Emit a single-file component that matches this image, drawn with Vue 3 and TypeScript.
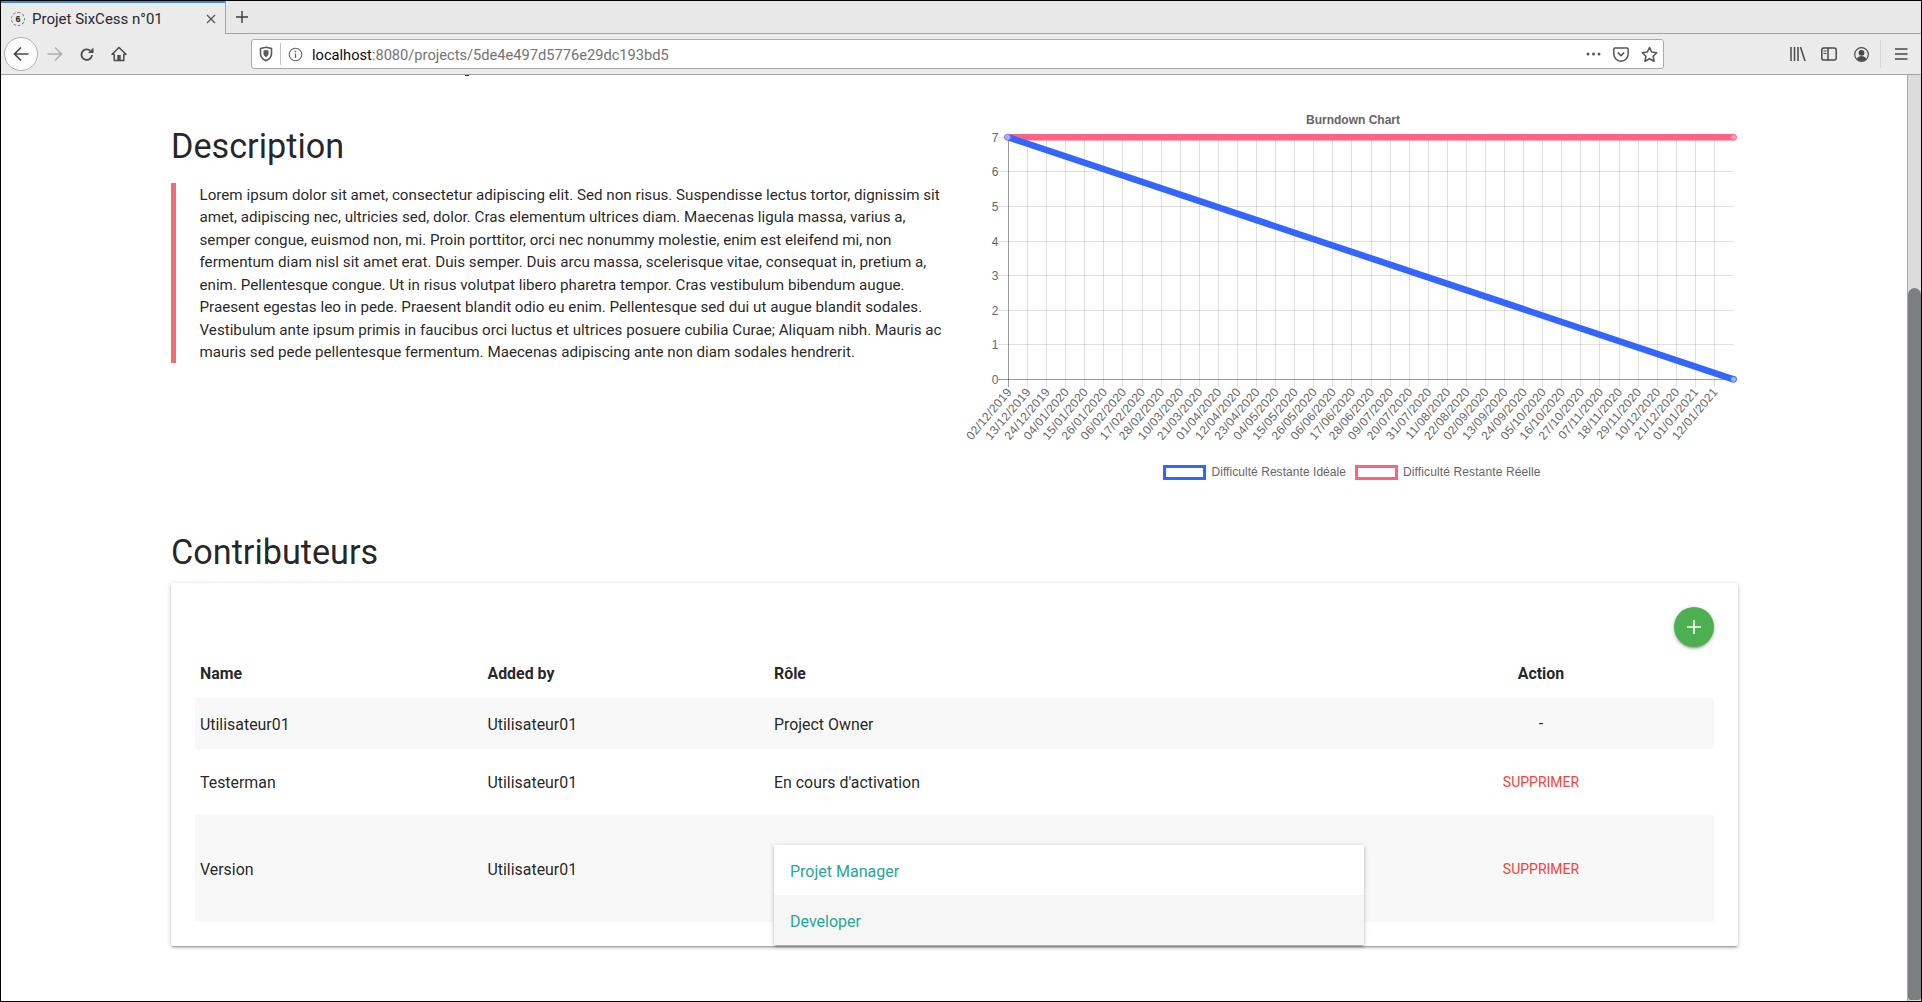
<script setup lang="ts">
const dates: string[] = [
  '02/12/2019','13/12/2019','24/12/2019','04/01/2020','15/01/2020','26/01/2020','06/02/2020','17/02/2020',
  '28/02/2020','10/03/2020','21/03/2020','01/04/2020','12/04/2020','23/04/2020','04/05/2020','15/05/2020',
  '26/05/2020','06/06/2020','17/06/2020','28/06/2020','09/07/2020','20/07/2020','31/07/2020','11/08/2020',
  '22/08/2020','02/09/2020','13/09/2020','24/09/2020','05/10/2020','16/10/2020','27/10/2020','07/11/2020',
  '18/11/2020','29/11/2020','10/12/2020','21/12/2020','01/01/2021','12/01/2021'
]
const x0 = 1008.5
const step = 19.08
const yTop = 137.3
const yBottom = 379.3
const xEnd = x0 + step * 38
const px = (v: number) => Math.round(v - 0.5) + 0.5
const xTicks = dates.map((label, i) => ({ label, x: px(x0 + step * i), lx: x0 + step * i + 4 }))
const yTicks = [7, 6, 5, 4, 3, 2, 1, 0].map((v) => ({ v, y: px(yBottom - (v * (yBottom - yTop)) / 7) }))
</script>

<template>
  <div class="frame">
    <header class="browser">
      <div class="tabbar">
        <div class="tab">
          <span class="favicon">6</span>
          <span class="tab-title">Projet SixCess n°01</span>
          <svg class="tab-close" width="12" height="12" viewBox="0 0 12 12"><path d="M2 2l8 8M10 2l-8 8" stroke="#555" stroke-width="1.3" fill="none" /></svg>
        </div>
        <svg class="new-tab" width="16" height="16" viewBox="0 0 16 16"><path d="M8 2v12M2 8h12" stroke="#3c3c3c" stroke-width="1.4" fill="none" /></svg>
      </div>
      <div class="toolbar">
        <button class="back">
          <svg width="18" height="18" viewBox="0 0 18 18"><path d="M16.5 9H2.5M9 2.5 2.5 9 9 15.500" stroke="#4a4a4a" stroke-width="1.7" fill="none" /></svg>
        </button>
        <svg class="t-forward" width="18" height="18" viewBox="0 0 18 18"><path d="M1.500 9h14M9 2.500 15.500 9 9 15.500" stroke="#b0b0b0" stroke-width="1.7" fill="none" /></svg>
        <svg class="t-reload" width="16" height="16" viewBox="0 0 16 16"><path d="M13 9a5.300 5.300 0 1 1-1.700-4.300" stroke="#4a4a4a" stroke-width="1.800" fill="none" /><path d="M14.500 1.500v5.500H9z" fill="#4a4a4a" /></svg>
        <svg class="t-home" width="16" height="16" viewBox="0 0 16 16"><path d="M8 1.500 1 8.200h2.200V14.500h9.600V8.200H15z" stroke="#4a4a4a" stroke-width="1.500" fill="none" stroke-linejoin="round" /><rect x="6.300" y="9" width="3.400" height="5.500" fill="#4a4a4a" /></svg>
        <div class="urlbar">
          <svg class="u-shield" width="14" height="16" viewBox="0 0 14 16"><path d="M1.500 2.500 7 1.200l5.500 1.300v5.200c0 3.200-2.400 5.500-5.500 7-3.100-1.500-5.500-3.800-5.500-7z" stroke="#5b5b5b" stroke-width="1.600" fill="none" /><path d="M4.500 4.500 7 4l2.500.5v3c0 1.800-1.200 3-2.500 3.800-1.300-.8-2.500-2-2.500-3.800z" fill="#5b5b5b" /></svg>
          <span class="u-sep"></span>
          <svg class="u-info" width="15" height="15" viewBox="0 0 15 15"><circle cx="7.500" cy="7.500" r="6.300" stroke="#666" stroke-width="1.100" fill="none" /><path d="M7.500 6.500v4.500" stroke="#666" stroke-width="1.300" /><circle cx="7.500" cy="4.400" r=".9" fill="#666" /></svg>
          <span class="u-text"><b>localhost</b>:8080/projects/5de4e497d5776e29dc193bd5</span>
          <svg class="u-dots" width="15" height="4" viewBox="0 0 15 4"><circle cx="2" cy="2" r="1.500" fill="#555" /><circle cx="7.500" cy="2" r="1.500" fill="#555" /><circle cx="13" cy="2" r="1.500" fill="#555" /></svg>
          <svg class="u-pocket" width="16" height="15" viewBox="0 0 16 15"><path d="M2 1h12a1.200 1.200 0 0 1 1.200 1.200V7a7.200 7.200 0 0 1-14.400 0V2.200A1.200 1.200 0 0 1 2 1z" stroke="#555" stroke-width="1.500" fill="none" /><path d="M4.800 5.500 8 8.500l3.200-3" stroke="#555" stroke-width="1.700" fill="none" /></svg>
          <svg class="u-star" width="17" height="16" viewBox="0 0 17 16"><path d="M8.500 1.500l2.200 4.500 5 .7-3.600 3.500.9 5-4.500-2.400L4 15.200l.9-5L1.300 6.700l5-.7z" stroke="#555" stroke-width="1.600" fill="none" stroke-linejoin="round" /></svg>
        </div>
        <svg class="r-lib" width="16" height="14" viewBox="0 0 16 14"><path d="M1 0v14M4.500 0v14M8 0v14M10.500 0l4.500 14" stroke="#4a4a4a" stroke-width="1.500" fill="none" /></svg>
        <svg class="r-side" width="16" height="14" viewBox="0 0 16 14"><rect x=".8" y="1" width="14.400" height="12" rx="2" stroke="#4a4a4a" stroke-width="1.500" fill="none" /><path d="M7 1v12" stroke="#4a4a4a" stroke-width="1.500" /><path d="M2.500 4h3M2.500 6.500h3" stroke="#4a4a4a" stroke-width="1.100" /></svg>
        <svg class="r-acc" width="15" height="15" viewBox="0 0 15 15"><circle cx="7.500" cy="7.500" r="6.800" stroke="#4a4a4a" stroke-width="1.200" fill="none" /><circle cx="7.500" cy="5.800" r="2.900" fill="#4a4a4a" /><path d="M2.800 12c1-2 2.700-2.900 4.700-2.900s3.700.9 4.700 2.900c-1.200 1.300-2.800 2-4.700 2s-3.500-.7-4.700-2z" fill="#4a4a4a" /></svg>
        <span class="r-sep"></span>
        <svg class="r-menu" width="13" height="12" viewBox="0 0 13 12"><path d="M0 1h12.500M0 6h12.500M0 11h12.500" stroke="#4a4a4a" stroke-width="1.500" /></svg>
      </div>
    </header>

    <div class="viewport">
      <main class="page">
        <span class="clipped-glyph"></span>
        <section class="top">
          <div class="desc">
            <h4>Description</h4>
            <blockquote>
              Lorem ipsum dolor sit amet, consectetur adipiscing elit. Sed non risus. Suspendisse lectus tortor, dignissim sit amet, adipiscing nec, ultricies sed, dolor. Cras elementum ultrices diam. Maecenas ligula massa, varius a, semper congue, euismod non, mi. Proin porttitor, orci nec nonummy molestie, enim est eleifend mi, non fermentum diam nisl sit amet erat. Duis semper. Duis arcu massa, scelerisque vitae, consequat in, pretium a, enim. Pellentesque congue. Ut in risus volutpat libero pharetra tempor. Cras vestibulum bibendum augue. Praesent egestas leo in pede. Praesent blandit odio eu enim. Pellentesque sed dui ut augue blandit sodales. Vestibulum ante ipsum primis in faucibus orci luctus et ultrices posuere cubilia Curae; Aliquam nibh. Mauris ac mauris sed pede pellentesque fermentum. Maecenas adipiscing ante non diam sodales hendrerit.
            </blockquote>
          </div>
          <svg class="chart" width="780" height="400" viewBox="960 100 780 400">
            <text x="1353" y="124" text-anchor="middle" class="c-title">Burndown Chart</text>
            <line v-for="t in xTicks" :key="t.label" :x1="t.x" :x2="t.x" :y1="137" y2="387" class="grid" />
            <line v-for="t in yTicks" :key="t.v" x1="998" :x2="xEnd" :y1="t.y" :y2="t.y" class="grid" />
            <line :x1="px(x0)" :x2="px(x0)" y1="137" y2="387" class="axis" />
            <line x1="998" :x2="xEnd" :y1="px(yBottom)" :y2="px(yBottom)" class="axis" />
            <text v-for="t in yTicks" :key="'y' + t.v" x="998.500" :y="t.y + 4" text-anchor="end" class="c-tick">{{ t.v }}</text>
            <text v-for="t in xTicks" :key="'l' + t.label" text-anchor="end" class="c-tick c-xlabel" :transform="`translate(${t.lx} 392) rotate(-50)`">{{ t.label }}</text>
            <line :x1="x0" :y1="yTop" :x2="xEnd" :y2="yTop" stroke="#ff6384" stroke-width="6.500" />
            <line :x1="x0" :y1="yTop" :x2="xEnd" :y2="yBottom" stroke="#3366ff" stroke-width="6.500" />
            <circle :cx="x0 - 1" :cy="yTop" r="3" fill="#b9a7e8" stroke="#6a7df0" />
            <circle :cx="xEnd" :cy="yTop" r="3" fill="#ff9fb3" stroke="#ff6384" />
            <circle :cx="xEnd" :cy="yBottom" r="3" fill="#9db6ff" stroke="#3366ff" />
            <rect x="1164.500" y="466.500" width="40" height="12" class="lg-blue" />
            <text x="1211.500" y="476" class="c-legend lg-a">Difficulté Restante Idéale</text>
            <rect x="1356.500" y="466.500" width="40" height="12" class="lg-pink" />
            <text x="1403" y="476" class="c-legend lg-b">Difficulté Restante Réelle</text>
          </svg>
        </section>

        <h4 class="contrib">Contributeurs</h4>
        <div class="card">
          <div class="card-actions">
            <button class="fab">
              <svg width="16" height="16" viewBox="0 0 16 16"><path d="M8 1v14M1 8h14" stroke="#fff" stroke-width="1.600" fill="none" /></svg>
            </button>
          </div>
          <table>
            <colgroup>
              <col class="c1" /><col class="c2" /><col class="c3" /><col class="c4" />
            </colgroup>
            <thead>
              <tr><th>Name</th><th>Added by</th><th>Rôle</th><th class="center">Action</th></tr>
            </thead>
            <tbody>
              <tr class="r1 striped"><td>Utilisateur01</td><td>Utilisateur01</td><td>Project Owner</td><td class="center">-</td></tr>
              <tr class="r2"><td>Testerman</td><td>Utilisateur01</td><td>En cours d'activation</td><td class="center"><a class="del">SUPPRIMER</a></td></tr>
              <tr class="r3 striped">
                <td>Version</td><td>Utilisateur01</td>
                <td class="select-cell">
                  <ul class="dropdown">
                    <li>Projet Manager</li>
                    <li class="active">Developer</li>
                  </ul>
                </td>
                <td class="center"><a class="del">SUPPRIMER</a></td>
              </tr>
            </tbody>
          </table>
        </div>
      </main>
      <div class="scrollbar"><div class="thumb"></div></div>
    </div>
  </div>
</template>

<style>
html, body { margin: 0; padding: 0; background: #fff; overflow: hidden; }
</style>

<style scoped>
.frame {
  box-sizing: border-box;
  width: 1922px;
  height: 1002px;
  border: 1px solid #000;
  display: flex;
  flex-direction: column;
  font-family: Roboto, "Liberation Sans", sans-serif;
  overflow: hidden;
}
.browser { flex: none; height: 73px; background: #ebebeb; border-bottom: 1px solid #a3a3a3; box-sizing: content-box; }
.tabbar { height: 32px; display: flex; align-items: center; background: #e8e8e8; border-bottom: 1px solid #a3a3a3; }
.tab {
  box-sizing: border-box;
  width: 225px;
  height: 33px;
  margin-bottom: -1px;
  background: #ebebeb;
  border-top: 2px solid #3d8ad6;
  border-right: 1px solid #a3a3a3;
  display: flex;
  align-items: center;
  padding-left: 10px;
}
.favicon {
  box-sizing: border-box;
  width: 14px;
  height: 14px;
  border: 1px dashed #777;
  border-radius: 50%;
  font: bold 9px/12px "Liberation Sans", sans-serif;
  text-align: center;
  color: #222;
  flex: none;
}
.tab-title { margin-left: 7px; font-size: 15px; color: #2a2a2e; flex: 1; white-space: nowrap; }
.tab-close { margin-right: 8px; flex: none; }
.new-tab { margin-left: 8px; }
.toolbar { height: 40px; display: flex; align-items: center; position: relative; }
.back {
  box-sizing: border-box;
  width: 34px;
  height: 34px;
  margin-left: 3px;
  border-radius: 50%;
  border: 1px solid #b1b1b1;
  background: #fcfcfc;
  padding: 0;
  display: flex;
  align-items: center;
  justify-content: center;
  flex: none;
}
.t-forward { margin-left: 8px; flex: none; }
.t-reload { margin-left: 15px; flex: none; }
.t-home { margin-left: 16px; flex: none; }
.urlbar {
  box-sizing: border-box;
  width: 1413px;
  height: 30px;
  margin-left: 124px;
  background: #fff;
  border: 1px solid #ababab;
  border-radius: 3px;
  display: flex;
  align-items: center;
  flex: none;
}
.u-shield { margin-left: 7px; flex: none; }
.u-sep { width: 1px; height: 22px; background: #c2c2c2; margin-left: 7px; flex: none; }
.u-info { margin-left: 7px; flex: none; }
.u-text { margin-left: 9px; padding-top: 1px; font-size: 14.65px; color: #737373; flex: 1; white-space: nowrap; }
.u-text b { font-weight: 400; color: #0c0c0d; }
.u-dots { flex: none; margin-right: 12px; }
.u-pocket { flex: none; margin-right: 12px; }
.u-star { flex: none; margin-right: 5px; }
.r-lib { margin-left: 126px; flex: none; }
.r-side { margin-left: 15px; flex: none; }
.r-acc { margin-left: 17px; flex: none; }
.r-sep { width: 1px; height: 28px; background: #d4d4d4; margin-left: 11px; flex: none; }
.r-menu { margin-left: 14px; flex: none; }

.viewport { flex: 1; min-height: 0; display: flex; }
.page { flex: 1; min-width: 0; padding-left: 170px; position: relative; color: rgba(0, 0, 0, 0.87); font-size: 15px; line-height: 1.5; }
.clipped-glyph { position: absolute; left: 464px; top: 0; width: 4px; height: 1px; background: #333; }
.scrollbar { flex: none; width: 13px; background: #dcdcdc; border-left: 1px solid #a8a8a8; }
.thumb { height: 712px; margin-top: 213px; background: #7b7f7f; border-radius: 7px 7px 3px 3px; }

.top { display: grid; grid-template-columns: 782px 780px; column-gap: 7px; align-items: start; padding-top: 25px; }
h4 { font-size: 34.2px; font-weight: 400; line-height: 110%; margin: 0; }
.desc { padding-top: 28px; }
blockquote { box-sizing: border-box; height: 180px; margin: 17px 0 0; padding: 1px 0 0 23.5px; border-left: 5px solid #ee6e73; font-size: 15.18px; line-height: 22.5px; }
.chart { display: block; }
.grid { stroke: rgba(0, 0, 0, 0.12); stroke-width: 1; }
.axis { stroke: rgba(0, 0, 0, 0.3); stroke-width: 1; }
.c-title { font: bold 12px "Liberation Sans", sans-serif; fill: #666; }
.c-tick, .c-legend { font: 12px "Liberation Sans", sans-serif; fill: #666; }
.c-xlabel { letter-spacing: 0.35px; }
.lg-a { letter-spacing: 0.05px; }
.lg-b { letter-spacing: 0.12px; }
.lg-blue { fill: #fff; stroke: #3366ff; stroke-width: 3; }
.lg-pink { fill: #fff; stroke: #ff6384; stroke-width: 3; }

.contrib { margin-top: 34px; margin-bottom: 11.4px; }
.card {
  box-sizing: border-box;
  width: 1567px;
  padding: 24px;
  border-radius: 2px;
  background: #fff;
  box-shadow: 0 2px 2px 0 rgba(0, 0, 0, 0.14), 0 3px 1px -2px rgba(0, 0, 0, 0.12), 0 1px 5px 0 rgba(0, 0, 0, 0.2);
}
.card-actions { display: flex; justify-content: flex-end; }
.fab {
  width: 40px;
  height: 40px;
  padding: 0;
  border: none;
  border-radius: 50%;
  background: #4caf50;
  display: flex;
  align-items: center;
  justify-content: center;
  box-shadow: 0 2px 2px 0 rgba(0, 0, 0, 0.14), 0 3px 1px -2px rgba(0, 0, 0, 0.12), 0 1px 5px 0 rgba(0, 0, 0, 0.2);
}
table { width: 1519px; table-layout: fixed; border-collapse: collapse; font-size: 15.9px; }
.c1 { width: 287.5px; }
.c2 { width: 286.5px; }
.c3 { width: 599px; }
.c4 { width: 346px; }
th { height: 51px; padding: 2px 5px 0; text-align: left; font-weight: 700; box-sizing: border-box; }
td { padding: 2px 5px 0; box-sizing: border-box; }
td.center { padding-top: 0; }
th.center { text-align: center; }
.center { text-align: center; }
.r1 td { height: 51px; }
.r2 td { height: 66px; }
.r3 td { height: 107px; }
.striped { background: #f8f8f8; }
.del { color: #f44336; font-size: 14px; }
.select-cell { position: relative; }
.dropdown {
  position: absolute;
  left: 5px;
  top: 30px;
  width: 590px;
  margin: 0;
  padding: 0;
  list-style: none;
  background: #fff;
  box-shadow: 0 2px 2px 0 rgba(0, 0, 0, 0.14), 0 3px 1px -2px rgba(0, 0, 0, 0.12), 0 1px 5px 0 rgba(0, 0, 0, 0.2);
}
.dropdown li { height: 50px; padding: 0 16px; font-size: 16px; line-height: 53px; color: #26a69a; }
.dropdown li.active { background: #f6f6f6; }
</style>
